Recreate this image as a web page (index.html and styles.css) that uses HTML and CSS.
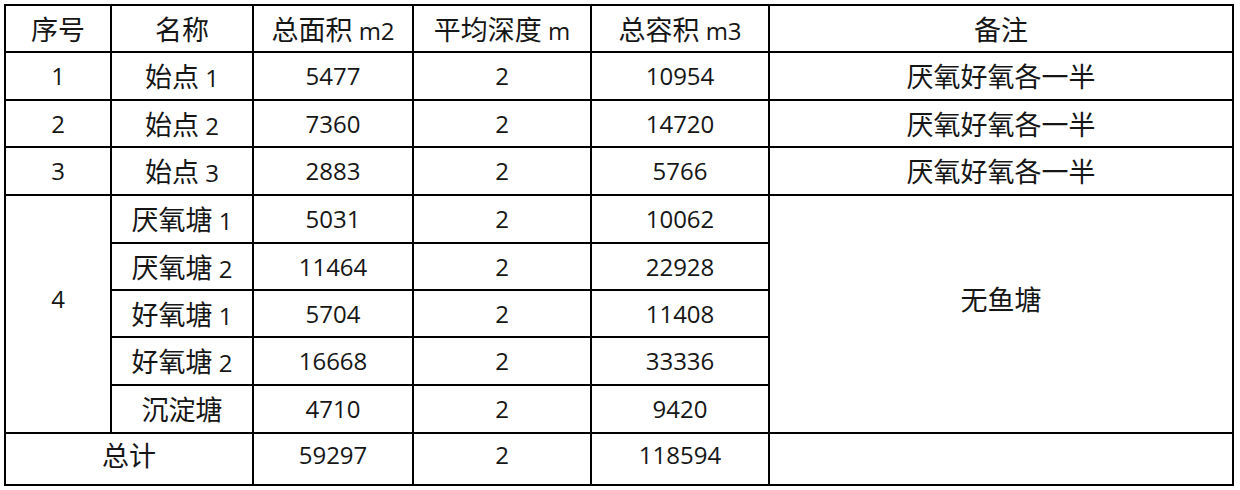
FILE: index.html
```html
<!DOCTYPE html>
<html lang="zh">
<head>
<meta charset="utf-8">
<link rel="stylesheet" href="styles.css">
</head>
<body>
<table class="grid">
  <colgroup>
    <col class="c1"><col class="c2"><col class="c3"><col class="c4"><col class="c5"><col class="c6">
  </colgroup>
  <tr class="h47">
    <td><span class="zh">序号</span></td>
    <td><span class="zh">名称</span></td>
    <td><span class="zh">总面积</span> m2</td>
    <td><span class="zh">平均深度</span> m</td>
    <td><span class="zh">总容积</span> m3</td>
    <td><span class="zh">备注</span></td>
  </tr>
  <tr class="h48">
    <td>1</td><td><span class="zh">始点</span> 1</td><td>5477</td><td>2</td><td>10954</td><td><span class="zh">厌氧好氧各一半</span></td>
  </tr>
  <tr class="h47">
    <td>2</td><td><span class="zh">始点</span> 2</td><td>7360</td><td>2</td><td>14720</td><td><span class="zh">厌氧好氧各一半</span></td>
  </tr>
  <tr class="h48">
    <td>3</td><td><span class="zh">始点</span> 3</td><td>2883</td><td>2</td><td>5766</td><td><span class="zh">厌氧好氧各一半</span></td>
  </tr>
  <tr class="h48">
    <td rowspan="5" class="merged">4</td><td><span class="zh">厌氧塘</span> 1</td><td>5031</td><td>2</td><td>10062</td><td rowspan="5" class="merged"><span class="zh">无鱼塘</span></td>
  </tr>
  <tr class="h47">
    <td><span class="zh">厌氧塘</span> 2</td><td>11464</td><td>2</td><td>22928</td>
  </tr>
  <tr class="h47">
    <td><span class="zh">好氧塘</span> 1</td><td>5704</td><td>2</td><td>11408</td>
  </tr>
  <tr class="h48">
    <td><span class="zh">好氧塘</span> 2</td><td>16668</td><td>2</td><td>33336</td>
  </tr>
  <tr class="h48">
    <td><span class="zh">沉淀塘</span></td><td>4710</td><td>2</td><td>9420</td>
  </tr>
  <tr class="h52 total">
    <td colspan="2"><span class="zh">总计</span></td><td>59297</td><td>2</td><td>118594</td><td></td>
  </tr>
</table>
</body>
</html>
```

FILE: styles.css
```css
html, body {
  margin: 0;
  padding: 0;
  background: #ffffff;
}

body {
  padding: 4px;
  font-family: "Open Sans", "Noto Sans CJK SC", sans-serif;
  font-size: 24px;
  color: #161616;
}

.grid {
  border-collapse: separate;
  border-spacing: 0;
  table-layout: fixed;
  width: 1230px;
  border-top: 2px solid #000;
  border-left: 2px solid #000;
}

.c1 { width: 106px; }
.c2 { width: 142px; }
.c3 { width: 160px; }
.c4 { width: 178px; }
.c5 { width: 178px; }
.c6 { width: 464px; }

.grid td {
  border-right: 2px solid #000;
  border-bottom: 2px solid #000;
  padding: 0;
  text-align: center;
  vertical-align: middle;
  line-height: 1;
  white-space: nowrap;
}

.zh {
  font-family: "Noto Sans CJK SC", sans-serif;
  font-size: 27px;
  font-weight: 400;
}

.h47 { height: 47px; }
.h48 { height: 48px; }
.h52 { height: 52px; }

.grid td.merged {
  padding-bottom: 30px;
}

.total td {
  padding-bottom: 8px;
}
```
